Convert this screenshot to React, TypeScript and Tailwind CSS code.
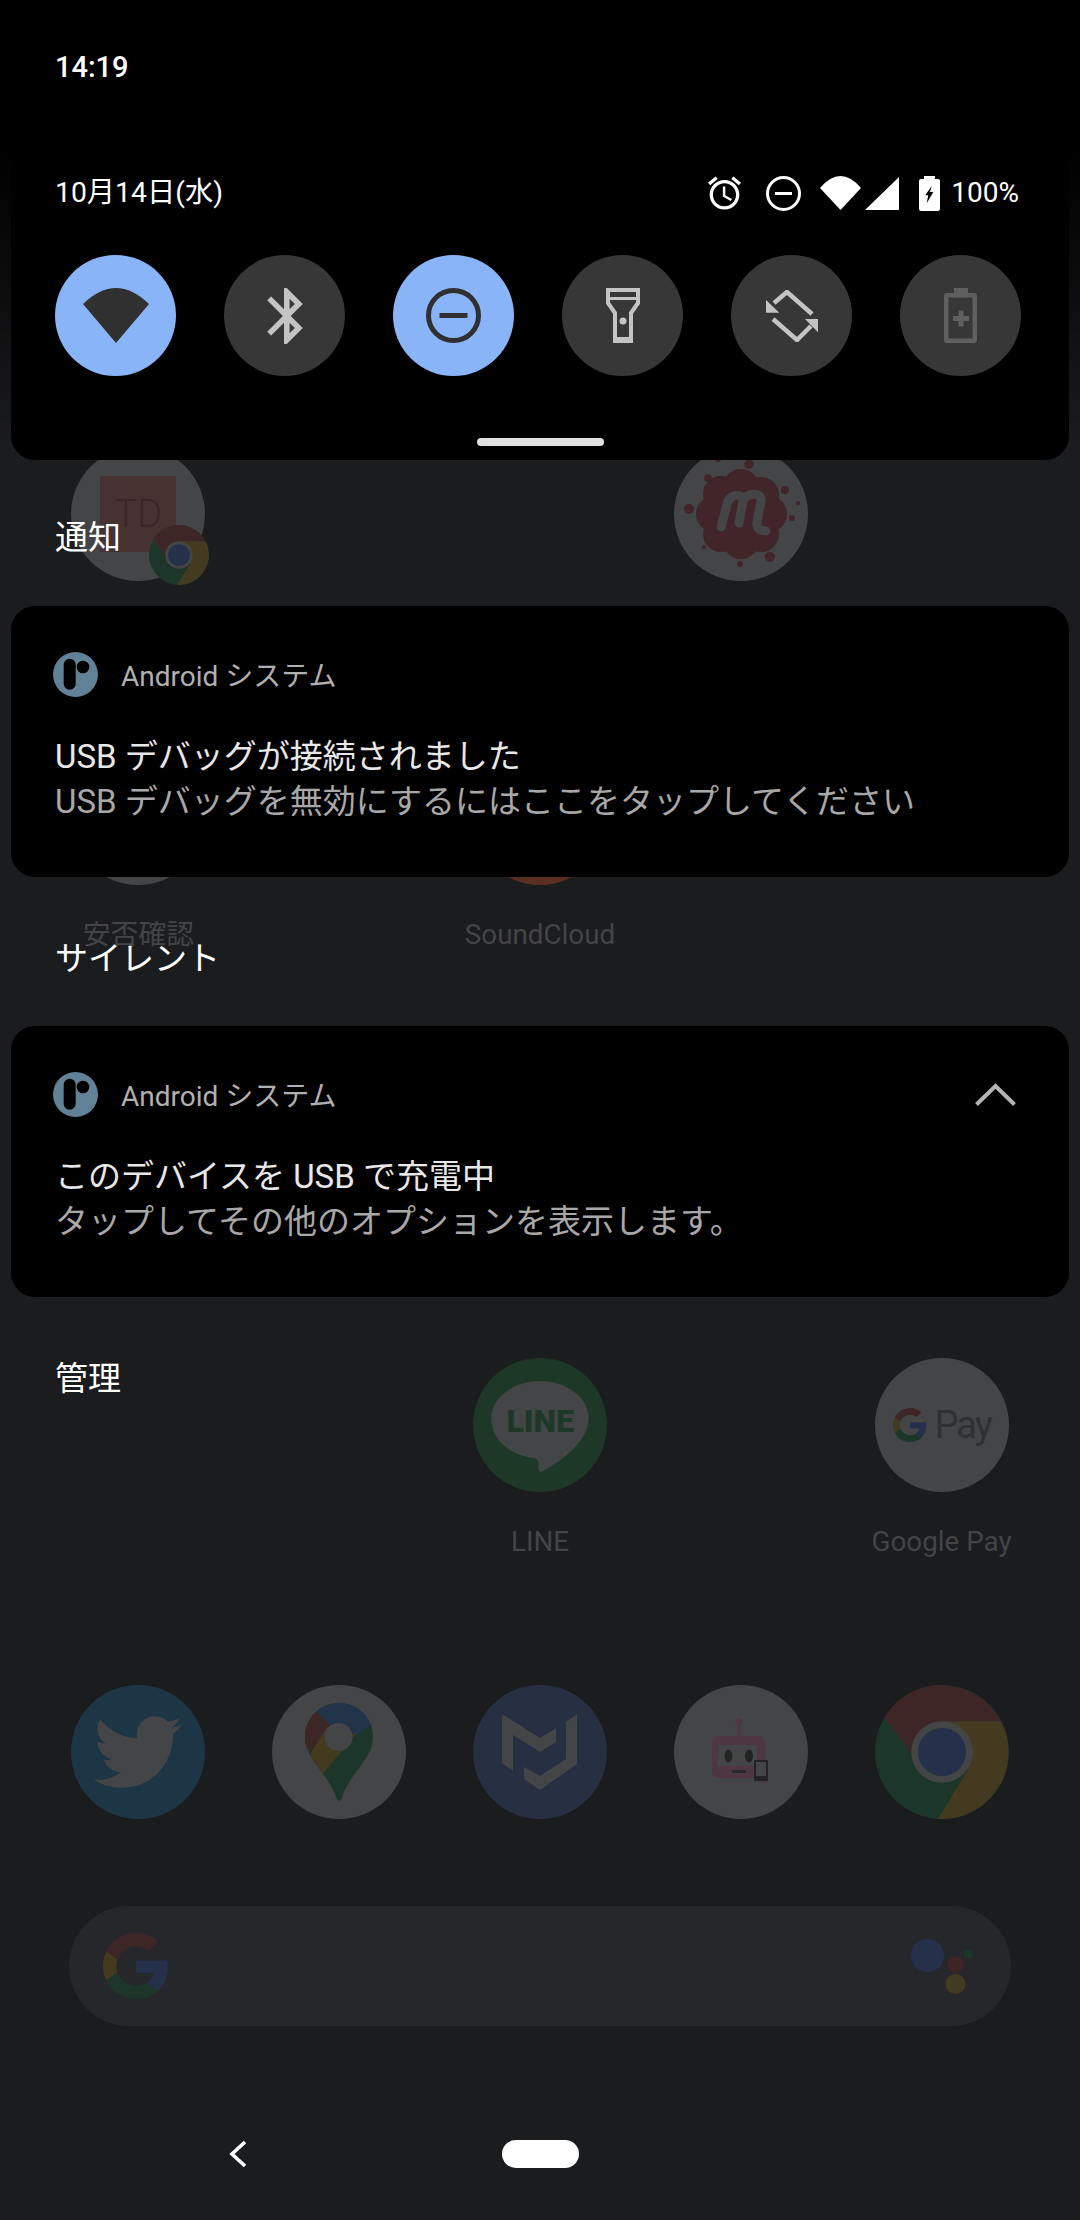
import React from 'react';
import { FaTwitter } from 'react-icons/fa';

const GRAY = '#444546';

const GoogleG: React.FC<{ size: number }> = ({ size }) => (
  <svg width={size} height={size} viewBox="0 0 48 48">
    <path fill="#3f2626" d="M24 9.5c3.54 0 6.71 1.22 9.21 3.6l6.85-6.85C35.9 2.38 30.47 0 24 0 14.62 0 6.51 5.38 2.56 13.22l7.98 6.19C12.43 13.72 17.74 9.5 24 9.5z" />
    <path fill="#25314a" d="M46.98 24.55c0-1.57-.15-3.09-.38-4.55H24v9.02h12.94c-.58 2.96-2.26 5.48-4.78 7.18l7.73 6c4.51-4.18 7.09-10.36 7.09-17.65z" />
    <path fill="#433a20" d="M10.53 28.59c-.48-1.45-.76-2.99-.76-4.59s.27-3.14.76-4.59l-7.98-6.19C.92 16.46 0 20.12 0 24c0 3.88.92 7.54 2.56 10.78l7.97-6.19z" />
    <path fill="#1d362a" d="M24 48c6.48 0 11.93-2.13 15.89-5.81l-7.73-6c-2.15 1.45-4.92 2.3-8.16 2.3-6.26 0-11.57-4.22-13.47-9.91l-7.98 6.19C6.51 42.62 14.62 48 24 48z" />
  </svg>
);

const ChromeLogo: React.FC<{ size: number }> = ({ size }) => (
  <svg width={size} height={size} viewBox="0 0 100 100" className="block">
    <circle cx="50" cy="50" r="50" fill="#1d362a" />
    <path fill="#3f2626" d="M50 27 L94 27 A50 50 0 0 0 7 24 L28 52 Z" />
    <path fill="#433a20" d="M50 27 L94 27 A50 50 0 0 1 47 100 L70 62 Z" />
    <circle cx="50" cy="50" r="23" fill={GRAY} />
    <circle cx="50" cy="50" r="18" fill="#25314a" />
  </svg>
);

const MeetupIcon = () => (
  <svg width="134" height="134" viewBox="0 0 134 134" className="block">
    <g fill="#412529">
      <circle cx="67" cy="67" r="36" />
      <circle cx="67" cy="40" r="18" />
      <circle cx="87" cy="48" r="18" />
      <circle cx="95" cy="67" r="18" />
      <circle cx="87" cy="87" r="18" />
      <circle cx="67" cy="94" r="18" />
      <circle cx="47" cy="87" r="18" />
      <circle cx="40" cy="67" r="18" />
      <circle cx="47" cy="47" r="18" />
      <circle cx="75" cy="17" r="4.7" />
      <circle cx="34" cy="31" r="3.7" />
      <circle cx="15" cy="62" r="5" />
      <circle cx="111" cy="43" r="4" />
      <circle cx="124" cy="56" r="2.2" />
      <circle cx="118" cy="71" r="3" />
      <circle cx="30" cy="100" r="2.2" />
      <circle cx="66" cy="117" r="3" />
      <circle cx="96" cy="110" r="5" />
      <circle cx="44" cy="12" r="3" />
    </g>
    <path
      d="M47 80 L54 54 M54 54 C59 46 70 47 69 54 L65 76 M69 54 C74 45 88 45 87 54 L83 75 C82 82 87 84 92 84"
      fill="none"
      stroke={GRAY}
      strokeWidth="9"
      strokeLinecap="round"
    />
  </svg>
);

const LineIcon = () => (
  <svg width="134" height="134" viewBox="0 0 134 134" className="block">
    <path
      fill={GRAY}
      d="M67 23 C93 23 115.6 39 115.6 60 C115.6 82 92 101 70 113 C66 115 65 113 65.5 108 C66 104 65 101 61 100 C36 97 18.4 82 18.4 60 C18.4 39 41 23 67 23 Z"
    />
    <text x="33.4" y="74" fontSize="32" fontWeight="900" fill="#1e3828" textLength="67.6" lengthAdjust="spacingAndGlyphs">
      LINE
    </text>
  </svg>
);

const MapsIcon = () => (
  <svg width="134" height="134" viewBox="0 0 134 134" className="block">
    <defs>
      <clipPath id="pin">
        <path d="M67 18 C86 18 101 33 101 52 C101 74 78 88 70 112 C69 117 65 117 64 112 C56 88 33 74 33 52 C33 33 48 18 67 18 Z" />
      </clipPath>
    </defs>
    <g clipPath="url(#pin)">
      <rect x="30" y="15" width="75" height="105" fill="#1d362a" />
      <path fill="#213449" d="M42 15 H105 V36 L85 50 L67 52 L40 28 Z" />
      <path fill="#3f2626" d="M30 25 L42 24 L58 40 L40 66 L30 60 Z" />
      <path fill="#433a20" d="M40 66 L55 42 L70 52 L85 48 L50 90 L35 80 Z" />
    </g>
    <circle cx="66.5" cy="52" r="14" fill={GRAY} />
  </svg>
);

const MalwareIcon = () => (
  <svg width="134" height="134" viewBox="0 0 134 134" className="block">
    <g fill={GRAY}>
      <polygon points="29,29 67,53 83,43 83,57 67,67 40,50 40,86 29,78" />
      <polygon points="104,29 104,79 67,105 51,94 51,82 67,91 93,74 93,37" />
    </g>
  </svg>
);

const RobotIcon = () => (
  <svg width="134" height="134" viewBox="0 0 134 134" className="block">
    <rect x="63.5" y="36" width="3" height="16" fill="#4f3643" />
    <circle cx="65" cy="37" r="3.5" fill="#4f3643" />
    <rect x="38" y="51" width="53" height="42" rx="7" fill="#4f3643" />
    <rect x="44" y="60" width="39" height="21" fill={GRAY} />
    <ellipse cx="54.5" cy="71" rx="4" ry="6.5" fill="#232324" />
    <ellipse cx="75" cy="71" rx="4" ry="6.5" fill="#232324" />
    <rect x="58" y="85" width="14" height="3" fill="#2a2a2c" />
    <rect x="86" y="88" width="8" height="10" rx="3" fill="#4f3643" />
    <rect x="80" y="75" width="14" height="21" rx="1" fill="#232324" />
    <rect x="82" y="77" width="10" height="14" fill={GRAY} />
  </svg>
);

const AppCell: React.FC<{ bg?: string; label?: string; children?: React.ReactNode }> = ({ bg, label, children }) => (
  <div className="flex flex-col items-center">
    <div className={`relative flex h-[134px] w-[134px] items-center justify-center rounded-full ${bg}`}>{children}</div>
    {label && <div className="mt-[30px] text-[27.8px] leading-[40px] text-[#434445]">{label}</div>}
  </div>
);

const QuickTile: React.FC<{ active?: boolean; children: React.ReactNode }> = ({ active, children }) => (
  <div className={`flex h-[121px] w-[121px] items-center justify-center rounded-full ${active ? 'bg-[#8ab4f8]' : 'bg-[#373737]'}`}>
    {children}
  </div>
);

const SystemIcon = () => (
  <svg width="45" height="45" viewBox="0 0 45 45" className="shrink-0">
    <circle cx="22.5" cy="22.5" r="22.5" fill="#618296" />
    <rect x="10.7" y="6.7" width="12" height="31" rx="6" fill="#000" />
    <circle cx="30" cy="15" r="6.3" fill="#000" />
  </svg>
);

const NotificationCard: React.FC<{ title: string; body: string; expandable?: boolean }> = ({ title, body, expandable }) => (
  <div className="h-[271px] rounded-[24px] bg-black pt-[46px]">
    <div className="flex h-[45px] items-center pl-[42px] pr-[53px]">
      <SystemIcon />
      <span className="ml-[23px] flex-1 pt-[4px] text-[28px] text-[#b0b0b0]">Android システム</span>
      {expandable && (
        <svg width="41" height="23" viewBox="0 0 41 23">
          <path d="M1.5 21.5 L20.5 3 L39.5 21.5" fill="none" stroke="#b4b4b4" strokeWidth="4" />
        </svg>
      )}
    </div>
    <div className="mt-[37px] pl-[44px] text-[33px] leading-[45px]">
      <div className="text-[#e8e8e8]">{title}</div>
      <div className="text-[#a8a8a8]">{body}</div>
    </div>
  </div>
);

const SectionLabel: React.FC<{ className: string; children: React.ReactNode }> = ({ className, children }) => (
  <div className={`-mx-[11px] h-[40px] pl-[55px] text-[33px] leading-[42px] text-white ${className}`}>{children}</div>
);

export default function App() {
  return (
    <div className="relative h-[2220px] w-[1080px] overflow-hidden bg-[#1b1c1e] font-['Roboto','Noto_Sans_CJK_JP',sans-serif]">
      {/* dimmed launcher */}
      <div className="pt-[447px]">
        <div className="grid grid-cols-5 px-[38px]">
          <AppCell bg="bg-[#444546]">
            <div className="flex h-[76px] w-[76px] items-center justify-center bg-[#473232] text-[38px] font-light text-[#3a2525]">TD</div>
            <div className="absolute left-[78px] top-[78px]">
              <ChromeLogo size={60} />
            </div>
          </AppCell>
          <div />
          <div />
          <AppCell bg="bg-[#444546]">
            <MeetupIcon />
          </AppCell>
        </div>

        <div className="mt-[170px] grid grid-cols-5 px-[38px]">
          <AppCell bg="bg-[#444546]" label="安否確認" />
          <div />
          <AppCell bg="bg-[#5a2f20]" label="SoundCloud" />
        </div>

        <div className="mt-[403px] grid grid-cols-5 px-[38px]">
          <div />
          <div />
          <AppCell bg="bg-[#1e3828]" label="LINE">
            <div className="absolute inset-0">
              <LineIcon />
            </div>
          </AppCell>
          <div />
          <AppCell bg="bg-[#444546]" label="Google Pay">
            <div className="flex items-center gap-[8px]">
              <GoogleG size={34} />
              <span className="text-[38px] leading-none tracking-[-2px] text-[#2f3032]">Pay</span>
            </div>
          </AppCell>
        </div>

        <div className="mt-[123px] grid grid-cols-5 px-[38px]">
          <AppCell bg="bg-[#1d3645]">
            <FaTwitter size={88} color={GRAY} />
          </AppCell>
          <AppCell bg="bg-[#444546]">
            <MapsIcon />
          </AppCell>
          <AppCell bg="bg-[#272f43]">
            <MalwareIcon />
          </AppCell>
          <AppCell bg="bg-[#444546]">
            <RobotIcon />
          </AppCell>
          <AppCell>
            <ChromeLogo size={134} />
          </AppCell>
        </div>

        <div className="mx-[69px] mt-[87px] flex h-[120px] items-center justify-between rounded-full bg-[#26272a] pl-[34px] pr-[39px]">
          <GoogleG size={66} />
          <svg width="61" height="55" viewBox="0 0 61 55">
            <circle cx="16.5" cy="16.5" r="16.5" fill="#25314a" />
            <circle cx="44.5" cy="25.5" r="8.3" fill="#3f2424" />
            <circle cx="57" cy="15" r="4.3" fill="#1d362a" />
            <circle cx="44.5" cy="45" r="10" fill="#433a20" />
          </svg>
        </div>

        <div className="mt-[114px] flex h-[28px] items-center pl-[229px]">
          <svg width="18" height="28" viewBox="0 0 18 28">
            <path d="M16 2 L3 14 L16 26" fill="none" stroke="#fff" strokeWidth="3.6" />
          </svg>
          <div className="ml-[255px] h-[28px] w-[77px] rounded-full bg-white" />
        </div>
      </div>

      {/* shade top scrim */}
      <div className="absolute inset-x-0 top-0 h-[460px] bg-linear-to-b from-black from-[33%] to-transparent" />

      {/* notification shade */}
      <div className="absolute inset-x-[11px] top-0">
        <div className="flex h-[460px] flex-col rounded-b-[24px] bg-black px-[44px]">
          <div className="h-[88px] pt-[47px] text-[29px] font-medium leading-[41px] text-white">14:19</div>

          <div className="mt-[85px] flex h-[40px] items-center justify-between pr-[6px] text-[28px] text-white">
            <span className="text-[28.3px]">10月14日(水)</span>
            <div className="flex items-center">
              <svg width="33" height="34" viewBox="2 1.86 20 20.14" fill="#fff">
                <path d="M22 5.72l-4.6-3.86-1.29 1.53 4.6 3.86L22 5.72zM7.88 3.39L6.6 1.86 2 5.71l1.29 1.53 4.59-3.85zM12.5 8H11v6l4.75 2.85.75-1.23-4-2.37V8zM12 4c-4.97 0-9 4.03-9 9s4.03 9 9 9c4.97 0 9-4.03 9-9s-4.03-9-9-9zm0 16c-3.87 0-7-3.13-7-7s3.13-7 7-7 7 3.13 7 7-3.13 7-7 7z" />
              </svg>
              <svg width="35" height="35" viewBox="0 0 35 35" className="ml-[25px]">
                <circle cx="17.5" cy="17.5" r="16" fill="none" stroke="#fff" strokeWidth="3" />
                <rect x="9" y="16" width="17" height="3" fill="#fff" />
              </svg>
              <svg width="41" height="34" viewBox="0 0 41 34" className="ml-[19px]">
                <path d="M0 12 Q20.5 -12 41 12 L20.5 34 Z" fill="#fff" />
              </svg>
              <svg width="34" height="33" viewBox="0 0 34 33" className="ml-[4px]">
                <polygon points="0,33 34,0 34,33" fill="#fff" />
              </svg>
              <svg width="21" height="35" viewBox="0 0 21 35" className="ml-[20px]">
                <rect x="5" y="0" width="11" height="5" fill="#fff" />
                <rect x="0" y="3" width="21" height="32" rx="2" fill="#fff" />
                <polygon points="12.7,10 6.3,19.3 9.3,19.3 7.7,27.3 14.3,16 11,16" fill="#000" />
              </svg>
              <span className="ml-[11px]">100%</span>
            </div>
          </div>

          <div className="mt-[42px] flex gap-[48px]">
            <QuickTile active>
              <svg width="66" height="55" viewBox="0 0 66 55">
                <path d="M0 16 Q33 -16 66 16 L33 55 Z" fill="#303030" />
              </svg>
            </QuickTile>
            <QuickTile>
              <svg width="36" height="56" viewBox="5 2 12.71 20" fill="#c4c4c4">
                <path d="M17.71 7.71L12 2h-1v7.59L6.41 5 5 6.41 10.59 12 5 17.59 6.41 19 11 14.41V22h1l5.71-5.71-4.3-4.29 4.3-4.29zM13 5.83l1.88 1.88L13 9.59V5.83zm1.88 10.46L13 18.17v-3.76l1.88 1.88z" />
              </svg>
            </QuickTile>
            <QuickTile active>
              <svg width="55" height="55" viewBox="0 0 55 55">
                <circle cx="27.5" cy="27.5" r="25" fill="none" stroke="#303030" strokeWidth="5" />
                <rect x="13.5" y="25" width="28" height="5" fill="#303030" />
              </svg>
            </QuickTile>
            <QuickTile>
              <svg width="34" height="55" viewBox="0 0 34 55">
                <path d="M2 2 H32 V15 L25 25 V53 H9 V25 L2 15 Z" fill="none" stroke="#c4c4c4" strokeWidth="4" />
                <rect x="2" y="9" width="30" height="3" fill="#c4c4c4" />
                <rect x="9" y="49" width="16" height="5" fill="#c4c4c4" />
                <circle cx="17" cy="33" r="3.5" fill="#c4c4c4" />
              </svg>
            </QuickTile>
            <QuickTile>
              <svg width="52" height="52" viewBox="0 0 52 52">
                <path d="M8 13 L21 2 L46 24" fill="none" stroke="#c4c4c4" strokeWidth="4.5" />
                <polygon points="0,10 13.3,22.7 0,22.7" fill="#c4c4c4" />
                <path d="M7 29 L31 50 L45 36" fill="none" stroke="#c4c4c4" strokeWidth="4.5" />
                <polygon points="52,29 39,29 52,42.3" fill="#c4c4c4" />
              </svg>
            </QuickTile>
            <QuickTile>
              <svg width="33" height="55" viewBox="0 0 33 55">
                <rect x="10" y="0" width="14" height="7" fill="#5f5f5f" />
                <rect x="2.25" y="7.25" width="28.5" height="45.5" rx="1" fill="none" stroke="#5f5f5f" strokeWidth="4.5" />
                <rect x="9" y="28" width="16" height="5" fill="#5f5f5f" />
                <rect x="14.5" y="22.5" width="5" height="16" fill="#5f5f5f" />
              </svg>
            </QuickTile>
          </div>

          <div className="mt-[62px] h-[8px] w-[127px] self-center rounded-full bg-[#e0e0e0]" />
        </div>

        <SectionLabel className="mt-[57px]">通知</SectionLabel>
        <div className="mt-[49px]">
          <NotificationCard title="USB デバッグが接続されました" body="USB デバッグを無効にするにはここをタップしてください" />
        </div>

        <SectionLabel className="mt-[61px]">サイレント</SectionLabel>
        <div className="mt-[48px]">
          <NotificationCard title="このデバイスを USB で充電中" body="タップしてその他のオプションを表示します。" expandable />
        </div>

        <SectionLabel className="mt-[61px]">管理</SectionLabel>
      </div>
    </div>
  );
}
